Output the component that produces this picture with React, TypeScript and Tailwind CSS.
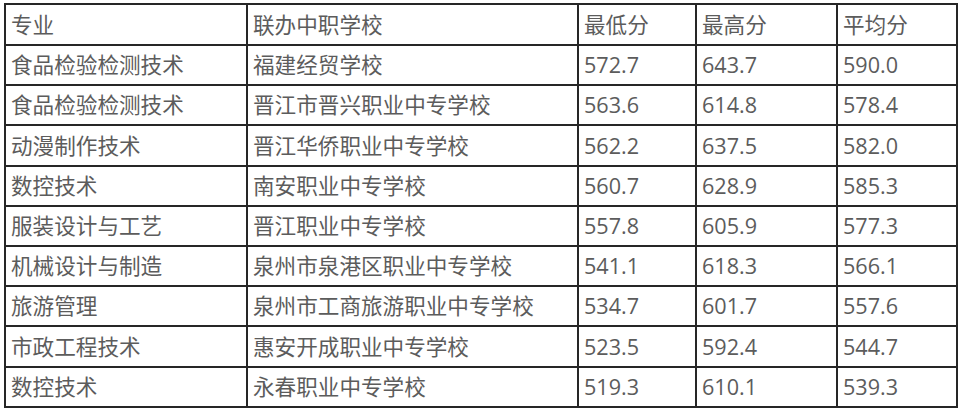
const rows = [
  ["食品检验检测技术", "福建经贸学校", "572.7", "643.7", "590.0"],
  ["食品检验检测技术", "晋江市晋兴职业中专学校", "563.6", "614.8", "578.4"],
  ["动漫制作技术", "晋江华侨职业中专学校", "562.2", "637.5", "582.0"],
  ["数控技术", "南安职业中专学校", "560.7", "628.9", "585.3"],
  ["服装设计与工艺", "晋江职业中专学校", "557.8", "605.9", "577.3"],
  ["机械设计与制造", "泉州市泉港区职业中专学校", "541.1", "618.3", "566.1"],
  ["旅游管理", "泉州市工商旅游职业中专学校", "534.7", "601.7", "557.6"],
  ["市政工程技术", "惠安开成职业中专学校", "523.5", "592.4", "544.7"],
  ["数控技术", "永春职业中专学校", "519.3", "610.1", "539.3"],
];

const head = ["专业", "联办中职学校", "最低分", "最高分", "平均分"];

export default function App() {
  return (
    <div className="h-[410px] w-[960px] bg-white pl-[4px] pt-[3px]">
      <table
        className="w-[952px] table-fixed border-collapse text-[21.6px] leading-none text-[#5c5c5c]"
        style={{ fontFamily: '"Open Sans", "Noto Sans CJK SC", sans-serif' }}
      >
        <colgroup>
          <col className="w-[242px]" />
          <col className="w-[331px]" />
          <col className="w-[118px]" />
          <col className="w-[141px]" />
          <col className="w-[120px]" />
        </colgroup>
        <thead>
          <tr className="h-[41px]">
            {head.map((h) => (
              <td key={h} className="border-2 border-[#262626] px-[5px] align-middle">
                {h}
              </td>
            ))}
          </tr>
        </thead>
        <tbody>
          {rows.map((r, i) => (
            <tr key={i} className="h-[40.2px]">
              {r.map((c, j) => (
                <td key={j} className="border-2 border-[#262626] px-[5px] align-middle">
                  {c}
                </td>
              ))}
            </tr>
          ))}
        </tbody>
      </table>
    </div>
  );
}
